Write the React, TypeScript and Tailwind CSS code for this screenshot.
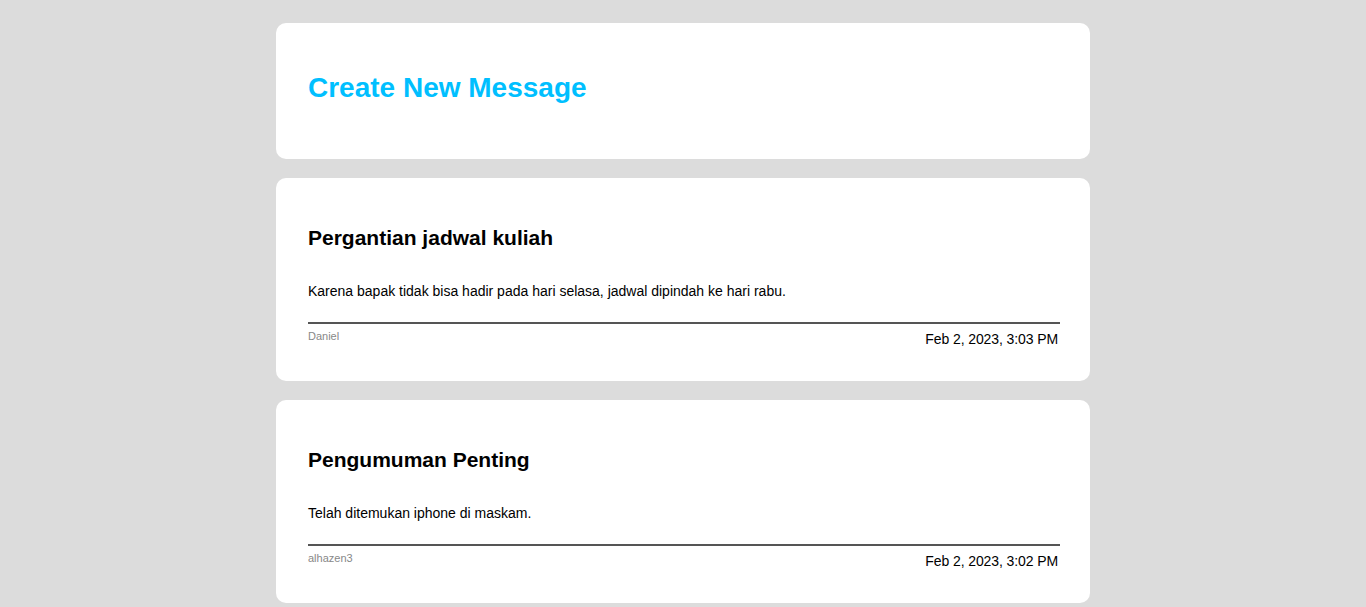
import React from "react";

const messages = [
  {
    title: "Pergantian jadwal kuliah",
    body: "Karena bapak tidak bisa hadir pada hari selasa, jadwal dipindah ke hari rabu.",
    author: "Daniel",
    date: "Feb 2, 2023, 3:03 PM",
  },
  {
    title: "Pengumuman Penting",
    body: "Telah ditemukan iphone di maskam.",
    author: "alhazen3",
    date: "Feb 2, 2023, 3:02 PM",
  },
];

export default function App() {
  return (
    <div
      className="min-h-screen bg-[#dcdcdc] pt-[23px] pb-[20px]"
      style={{ fontFamily: '"Liberation Sans", Arial, Helvetica, sans-serif' }}
    >
      <div className="mx-auto flex w-[814px] flex-col gap-[19px]">
        <div className="rounded-[10px] bg-white pl-8 pr-[30px] pt-[49px] pb-[55px]">
          <h1 className="text-[28px] leading-[32px] font-bold text-[#00bfff]">
            Create New Message
          </h1>
        </div>
        {messages.map((m) => (
          <div key={m.title} className="rounded-[10px] bg-white pl-8 pr-[30px] pt-[48px] pb-[34px]">
            <h2 className="text-[21px] leading-[24px] font-bold text-black">{m.title}</h2>
            <p className="mt-[33px] text-[14px] leading-[16px] text-black">{m.body}</p>
            <div className="mt-[23px] h-[2px] bg-[#555555]" />
            <div className="mt-[6px] flex items-start justify-between pr-[2px]">
              <span className="text-[11px] leading-[13px] text-[#888888]">{m.author}</span>
              <span className="mt-[1px] text-[14px] leading-[16px] tracking-[-0.1px] text-black">{m.date}</span>
            </div>
          </div>
        ))}
      </div>
    </div>
  );
}
